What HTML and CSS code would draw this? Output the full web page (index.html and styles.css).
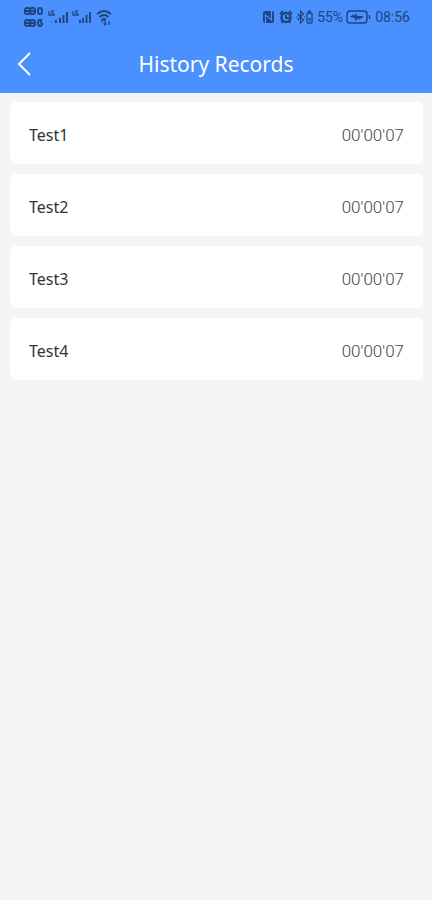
FILE: index.html
```html
<!DOCTYPE html>
<html lang="en">
<head>
<meta charset="utf-8">
<meta name="viewport" content="width=device-width, initial-scale=1">
<title>History Records</title>
<link rel="stylesheet" href="styles.css">
</head>
<body>
<header class="header">
  <div class="status">
    <div class="status-group">
      <svg class="icon" width="92" height="24" viewBox="0 0 92 24" fill="none" stroke="currentColor" aria-hidden="true">
        <g stroke-width="2">
          <rect x="3" y="3" width="5" height="6" rx="2"/><rect x="8" y="3" width="5" height="6" rx="2"/><path d="M4 6h8"/>
          <rect x="16" y="3" width="4" height="6" rx="2"/>
          <rect x="3" y="15" width="5" height="6" rx="2"/><rect x="8" y="15" width="5" height="6" rx="2"/><path d="M4 18h8"/>
          <path d="M20 15h-2q-2 0-2 3t2 3 2-2-2-2"/>
        </g>
        <path d="M27 6v4h2m3-4h-2v4h2V8M51 6v4h2m3-4h-2v4h2V8" stroke-width="1.3"/>
        <path d="M34 18v-3M38 18v-5M41.500 18V10M45 18V7M58 18v-3M61 18v-5M64.500 18V10M68 18V7" stroke-width="2"/>
        <path d="M28 16l2 2 2-2" stroke-width="1" opacity=".5"/>
        <path d="M75 9q7-6 14 0M77.500 12q4.500-4 9 0M80 15q2-2 4 0" stroke-width="2"/>
        <path d="M79 15l2 2M83 15v5m-1.500-1.500L83 20l1.500-1.500M87 20v-4" stroke-width="1.200"/>
      </svg>
    </div>
    <div class="status-group">
      <svg class="icon" width="52" height="16" viewBox="0 0 52 16" fill="none" stroke="currentColor" aria-hidden="true">
        <rect x="1" y="2" width="11" height="12" rx="2" fill="currentColor" stroke="none"/>
        <path d="M3.500 14V6l6 5V2" stroke="#4a90fe" stroke-width="1.200"/>
        <circle cx="24" cy="8.500" r="4.500" stroke-width="2.500"/>
        <path d="M18 5l3-3M30 5l-3-3M19.500 14l1.500-2M28.500 14l-1.500-2M24 6v3h3" stroke-width="2"/>
        <path d="M35.500 5l6 6-3 3V2l3 3-6 6M34 8h1M42 8h1" stroke-width="1.200"/>
        <rect x="45" y="4" width="5" height="10" rx="1" stroke-width="1.300"/><path d="M46 2.500h3M47.500 9v3" stroke-width="2"/>
      </svg>
      <span class="battery-text">55%</span>
      <svg class="icon battery" width="25" height="16" viewBox="0 0 25 16" fill="none" stroke="currentColor" aria-hidden="true">
        <rect x="1" y="2" width="20" height="12" rx="3" stroke-width="1.500"/>
        <path d="M4 8l4-3v2l3-3v3h7l-5 4V9l-4 3V9z" fill="currentColor" stroke="none"/>
        <path d="M23.500 6v4" stroke-width="1.500"/>
      </svg>
      <time>08:56</time>
    </div>
  </div>
  <nav class="bar">
    <button class="back" type="button" aria-label="Back">
      <svg width="14" height="24" viewBox="0 0 14 24" fill="none" stroke="currentColor" stroke-width="2" aria-hidden="true"><path d="M13 1L2 12l11 11"/></svg>
    </button>
    <h1>History Records</h1>
  </nav>
</header>
<main>
  <ul class="records">
    <li class="record"><span>Test1</span><span class="duration">00'00'07</span></li>
    <li class="record"><span>Test2</span><span class="duration">00'00'07</span></li>
    <li class="record"><span>Test3</span><span class="duration">00'00'07</span></li>
    <li class="record"><span>Test4</span><span class="duration">00'00'07</span></li>
  </ul>
</main>
</body>
</html>
```
FILE: styles.css
```css
* { box-sizing: border-box; }
body {
  margin: 0;
  min-height: 100vh;
  background: #f5f5f5;
  color: #333;
  font-family: "Noto Sans", sans-serif;
}
.header { background: #4a90fe; color: #fff; }
.status {
  display: flex;
  justify-content: space-between;
  height: 34px;
  padding: 5px 22px 0;
  color: #21457f;
  font-family: Roboto, sans-serif;
  font-size: 14px;
  line-height: 24px;
}
.status-group { display: flex; align-items: center; height: 24px; }
.icon { display: block; }
.battery-text { margin: 0 3px; }
.battery { margin-right: 4px; }
.bar {
  display: grid;
  grid-template-columns: 48px 1fr 48px;
  align-items: center;
  height: 59px;
}
.back {
  display: flex;
  align-items: center;
  justify-content: center;
  height: 48px;
  padding: 0;
  border: 0;
  background: none;
  color: inherit;
}
h1 {
  margin: 0;
  text-align: center;
  font-size: 21px;
  font-weight: 400;
  line-height: 30px;
}
.records {
  display: grid;
  gap: 10px;
  margin: 0;
  padding: 9px 9px 9px 10px;
  list-style: none;
}
.record {
  display: flex;
  align-items: center;
  justify-content: space-between;
  height: 62px;
  padding: 4px 19px 0;
  border-radius: 6px;
  background: #fff;
  font-size: 16px;
  line-height: 24px;
}
.duration { color: #444; font-family: Roboto, sans-serif; font-size: 17px; font-weight: 300; }
```
